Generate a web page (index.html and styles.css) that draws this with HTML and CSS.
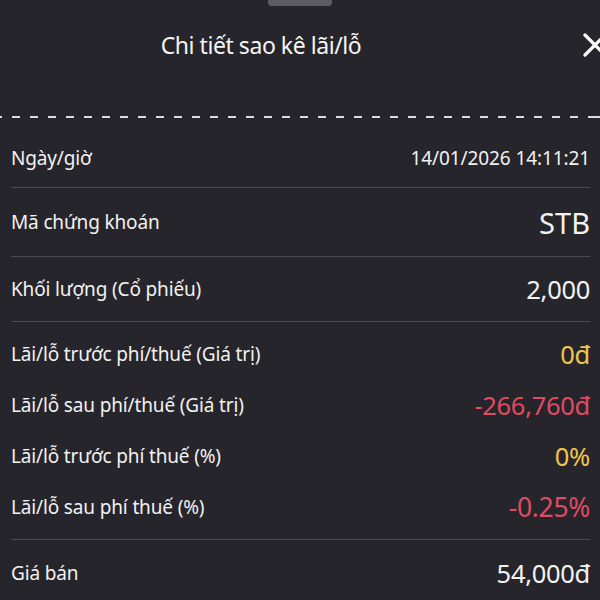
FILE: index.html
```html
<!DOCTYPE html>
<html lang="vi">
<head>
<meta charset="utf-8">
<link rel="stylesheet" href="styles.css">
</head>
<body>
<div class="sheet">
  <div class="handle"></div>
  <header class="header">
    <h1 class="title">Chi tiết sao kê lãi/lỗ</h1>
    <button class="close" aria-label="Đóng">
      <svg width="24" height="24" viewBox="0 0 24 24"><path d="M2 2L22 22M22 2L2 22" stroke="#fff" stroke-width="3.2" stroke-linecap="round"/></svg>
    </button>
  </header>
  <div class="dashed"></div>
  <div class="list">
    <div class="row r1"><span class="label">Ngày/giờ</span><span class="value date">14/01/2026 14:11:21</span></div>
    <div class="row r2"><span class="label">Mã chứng khoán</span><span class="value code">STB</span></div>
    <div class="row r3"><span class="label">Khối lượng (Cổ phiếu)</span><span class="value">2,000</span></div>
    <div class="group">
      <div class="line"><span class="label">Lãi/lỗ trước phí/thuế (Giá trị)</span><span class="value yellow">0đ</span></div>
      <div class="line"><span class="label">Lãi/lỗ sau phí/thuế (Giá trị)</span><span class="value red">-266,760đ</span></div>
      <div class="line"><span class="label">Lãi/lỗ trước phí thuế (%)</span><span class="value yellow">0%</span></div>
      <div class="line"><span class="label">Lãi/lỗ sau phí thuế (%)</span><span class="value red pct">-0.25%</span></div>
    </div>
    <div class="row r5"><span class="label">Giá bán</span><span class="value">54,000đ</span></div>
  </div>
</div>
</body>
</html>
```
FILE: styles.css
```css
html, body {
  margin: 0;
  padding: 0;
  background: #26252b;
}
body {
  width: 600px;
  height: 600px;
  overflow: hidden;
  font-family: "Noto Sans", "Open Sans", sans-serif;
  color: #f2f2f2;
}
.sheet {
  position: relative;
  width: 600px;
}
.handle {
  width: 64px;
  height: 6px;
  margin: 0 auto;
  background: #5c5c62;
  border-radius: 0 0 4px 4px;
}
.header {
  position: relative;
  height: 80px;
  display: flex;
  align-items: center;
  justify-content: center;
  padding-right: 78px;
}
.title {
  margin: 0;
  font-size: 23px;
  font-weight: 400;
  letter-spacing: -0.45px;
  color: #f5f5f5;
  transform: translateY(-1px);
}
.close {
  position: absolute;
  right: -7px;
  top: 27px;
  width: 24px;
  height: 24px;
  padding: 0;
  border: 0;
  background: none;
}
.close svg { display: block; }
.dashed {
  margin-top: 30px;
  height: 2px;
  background: repeating-linear-gradient(90deg, #dcdcdc 0 8px, transparent 8px 18px);
  background-position: -6px 0;
}
.list {
  padding: 11px 10px 0 11px;
}
.row {
  display: flex;
  align-items: center;
  justify-content: space-between;
  border-bottom: 1px solid #4a494f;
}
.r1 { height: 58px; }
.r2 { height: 68px; }
.r3 { height: 64px; }
.r5 { height: 66px; border-bottom: 0; }
.group {
  padding: 6px 0 7px;
  border-bottom: 1px solid #4a494f;
}
.line {
  height: 51px;
  display: flex;
  align-items: center;
  justify-content: space-between;
}
.label {
  font-size: 19px;
  letter-spacing: -0.15px;
}
.value {
  font-size: 25.5px;
  letter-spacing: -0.3px;
}
.value.date { font-size: 19px; letter-spacing: -0.1px; }
.value.code { font-size: 29px; letter-spacing: 0; }
.value.pct { font-size: 26.5px; }
.yellow { color: #efc54e; }
.red { color: #df4b62; }
```
